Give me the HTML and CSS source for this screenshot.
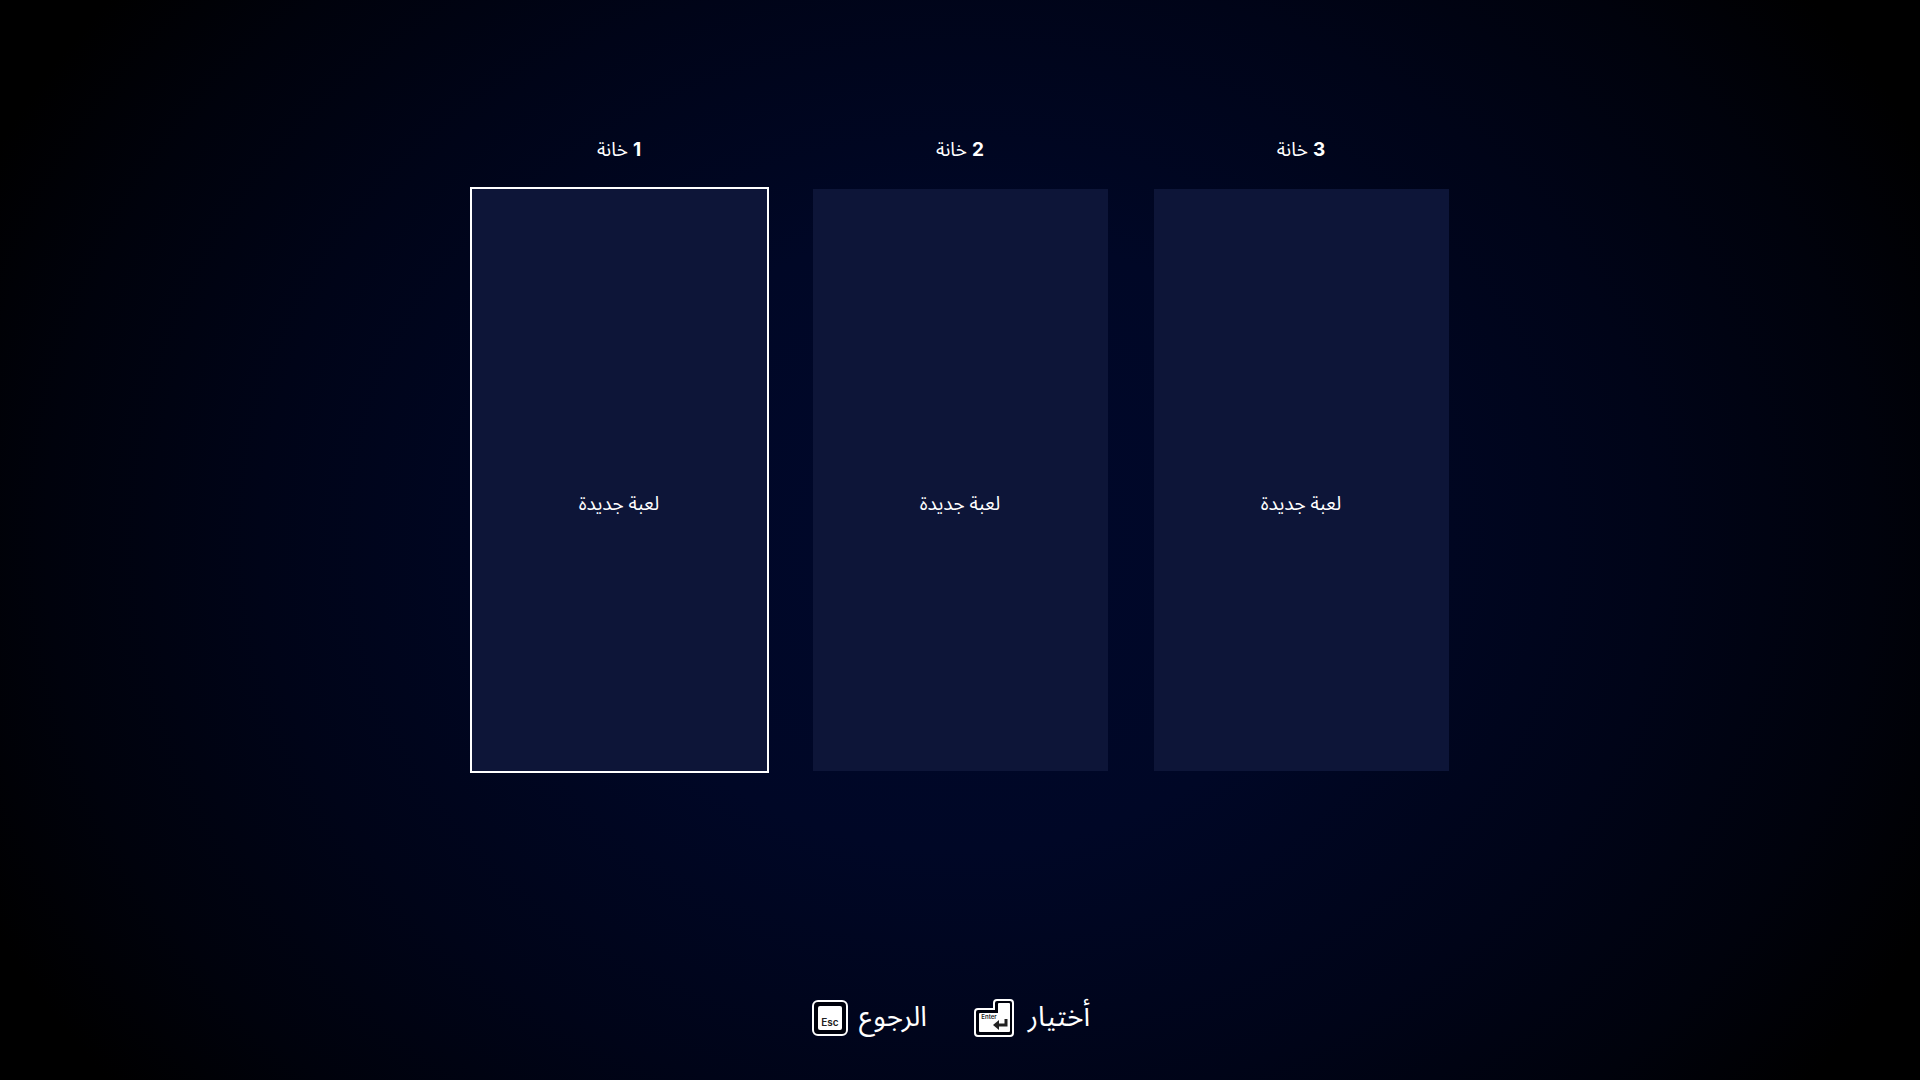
FILE: index.html
```
<!DOCTYPE html>
<html lang="ar">

<head>
    <meta charset="UTF-8">
    <title>لعبة جديدة</title>
    <link rel="stylesheet" href="styles.css">
</head>

<body>

    <main class="slots">
        <section class="slot">
            <h2 class="slot-title" dir="rtl"><b>1</b> خانة</h2>
            <button type="button" class="slot-card selected" dir="rtl">لعبة جديدة</button>
        </section>
        <section class="slot">
            <h2 class="slot-title" dir="rtl"><b>2</b> خانة</h2>
            <button type="button" class="slot-card" dir="rtl">لعبة جديدة</button>
        </section>
        <section class="slot">
            <h2 class="slot-title" dir="rtl"><b>3</b> خانة</h2>
            <button type="button" class="slot-card" dir="rtl">لعبة جديدة</button>
        </section>
    </main>

    <footer class="hints">
        <button type="button" class="hint">
            <svg width="36" height="36" viewBox="0 0 36 36">
                <rect x="1" y="1" width="34" height="34" rx="5" fill="#00020c" stroke="#fff" stroke-width="2" />
                <rect x="6" y="6" width="24" height="24" rx="2" fill="#fff" />
                <text x="18" y="26" class="key-label esc">Esc</text>
            </svg>
            <span class="hint-text" dir="rtl">الرجوع</span>
        </button>
        <button type="button" class="hint">
            <svg width="40" height="38" viewBox="0 0 40 38">
                <path d="M23 1H36Q39 1 39 4V34Q39 37 36 37H4Q1 37 1 34V13Q1 10 4 10H20V4Q20 1 23 1Z" fill="#00020c" stroke="#fff" stroke-width="2" />
                <path d="M25 4H35Q36 4 36 5V32Q36 33 35 33H6Q5 33 5 32V15Q5 14 6 14H24V5Q24 4 25 4Z" fill="#fff" />
                <text x="15" y="20" class="key-label enter">Enter</text>
                <path d="M32 20V26H24" fill="none" stroke="#222" stroke-width="3" />
                <path d="M19 26L25 21V31Z" fill="#222" />
            </svg>
            <span class="hint-text" dir="rtl">أختيار</span>
        </button>
    </footer>

</body>

</html>
```

FILE: styles.css
```
* {
    box-sizing: border-box;
}

html,
body,
h2 {
    padding: 0px;
    margin: 0px;
}

body {
    min-height: 100vh;
    display: flex;
    flex-direction: column;
    align-items: center;
    padding: 136px 24px 41px 24px;
    background: radial-gradient(56% 82% at 50% 50%, #00082b 0%, #000726 35%, #000418 65%, #00020c 85%, #000000 100%);
    color: #ffffff;
    font-family: "Noto Sans Arabic", "DejaVu Sans", sans-serif;
}

button {
    border: none;
    padding: 0px;
    background: none;
    color: inherit;
    font-family: inherit;
    cursor: pointer;
}

.slots {
    width: 100%;
    max-width: 977px;
    flex: 1;
    display: flex;
    gap: 46px;
}

.slot {
    flex: 1;
    display: flex;
    flex-direction: column;
    gap: 25px;
}

.slot-title {
    height: 28px;
    line-height: 28px;
    font-size: 19px;
    font-weight: normal;
    text-align: center;
}

.slot-title b {
    font-family: Inter, sans-serif;
    font-weight: bold;
}

.slot-card {
    flex: 1;
    min-height: 240px;
    padding-top: 48px;
    background: #0d1538;
    font-size: 19px;
}

.slot-card.selected {
    outline: 2px solid #ffffff;
}

.hints {
    display: flex;
    gap: 42px;
    margin-top: 226px;
    padding-right: 10px;
}

.hint {
    display: flex;
    align-items: center;
    gap: 6px;
    height: 42px;
    font-size: 28px;
    line-height: 42px;
}

.hint-text {
    min-width: 78px;
    text-align: center;
}

.key-label {
    font-family: Inter, sans-serif;
    fill: #222222;
    text-anchor: middle;
}

.esc {
    font-size: 10px;
    font-weight: 600;
}

.enter {
    font-size: 6px;
    font-weight: 600;
}
```
